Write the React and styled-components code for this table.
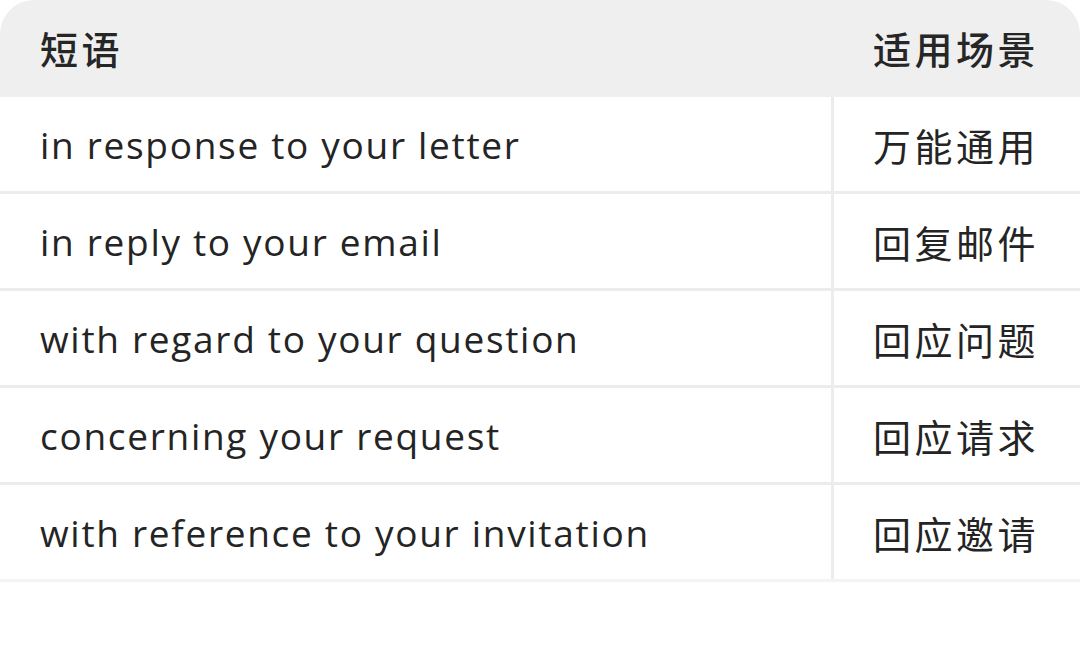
import styled, { createGlobalStyle } from "styled-components";

const GlobalStyle = createGlobalStyle`
  body {
    margin: 0;
    background: #ffffff;
    font-family: "Open Sans", "Noto Sans CJK SC", sans-serif;
  }
`;

const rows = [
  ["in response to your letter", "万能通用"],
  ["in reply to your email", "回复邮件"],
  ["with regard to your question", "回应问题"],
  ["concerning your request", "回应请求"],
  ["with reference to your invitation", "回应邀请"],
];

export default function App() {
  return (
    <>
      <GlobalStyle />
      <Table>
        <HeadRow>
          <HeadCell>短语</HeadCell>
          <HeadCell>适用场景</HeadCell>
        </HeadRow>
        {rows.map(([phrase, usage], i) => (
          <Row key={phrase} $last={i === rows.length - 1}>
            <Phrase>{phrase}</Phrase>
            <Usage>{usage}</Usage>
          </Row>
        ))}
      </Table>
    </>
  );
}

const Table = styled.div`
  width: 1080px;
  height: 668px;
  background: #fff;
  color: #222;
`;

const HeadRow = styled.div`
  display: grid;
  grid-template-columns: 833px 247px;
  height: 97px;
  background: #efefef;
  border-radius: 34px 34px 0 0;
  align-items: center;
`;

const HeadCell = styled.div`
  font-family: "Noto Sans CJK SC", sans-serif;
  font-size: 38px;
  font-weight: 500;
  padding-left: 40px;
  color: #262626;
  letter-spacing: 3.5px;
  padding-bottom: 2px;
`;

const Row = styled.div`
  display: grid;
  grid-template-columns: 834px 246px;
  height: 94px;
  border-bottom: 3px solid ${p => (p.$last ? "#f4f4f4" : "#ececec")};
`;

const Phrase = styled.div`
  display: flex;
  align-items: center;
  padding-left: 40px;
  font-family: "Open Sans", sans-serif;
  font-size: 37px;
  letter-spacing: 1.7px;
  color: #242424;
  border-right: 3px solid #ececec;
`;

const Usage = styled.div`
  display: flex;
  align-items: center;
  padding-left: 39px;
  font-family: "Noto Sans CJK SC", sans-serif;
  font-size: 38px;
  letter-spacing: 3.5px;
  color: #242424;
`;
